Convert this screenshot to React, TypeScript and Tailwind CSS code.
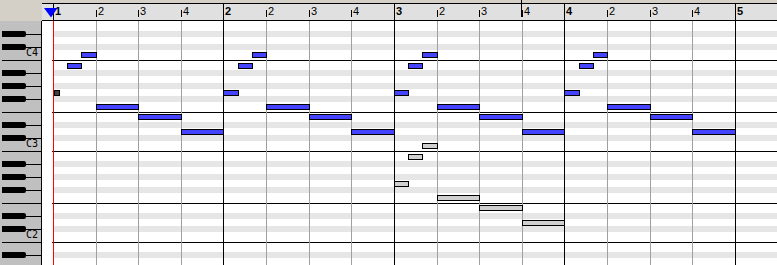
import React from "react";

const BEAT = 42.625;
const X = (b: number) => Math.round(52.99 + b * BEAT);

const PT: Record<string, number> = {
  C4: 52, B3: 63, G3: 90, F3: 104, E3: 114, D3: 129,
  C3: 143, B2: 154, G2: 181, F2: 195, E2: 205, D2: 220,
};

type Note = { p: string; s: number; e: number; kind: "blue" | "gray" | "dark"; x?: number; w?: number };

const notes: Note[] = [];
for (let bar = 0; bar < 4; bar++) {
  const o = bar * 4;
  if (bar === 0) notes.push({ p: "G3", s: 0, e: 0, kind: "dark", x: 54, w: 6 });
  else notes.push({ p: "G3", s: o, e: o + 1 / 3, kind: "blue" });
  notes.push({ p: "B3", s: o + 1 / 3, e: o + 2 / 3, kind: "blue" });
  notes.push({ p: "C4", s: o + 2 / 3, e: o + 1, kind: "blue" });
  notes.push({ p: "F3", s: o + 1, e: o + 2, kind: "blue" });
  notes.push({ p: "E3", s: o + 2, e: o + 3, kind: "blue" });
  notes.push({ p: "D3", s: o + 3, e: o + 4, kind: "blue" });
}
{
  const o = 8;
  notes.push({ p: "G2", s: o, e: o + 1 / 3, kind: "gray" });
  notes.push({ p: "B2", s: o + 1 / 3, e: o + 2 / 3, kind: "gray" });
  notes.push({ p: "C3", s: o + 2 / 3, e: o + 1, kind: "gray" });
  notes.push({ p: "F2", s: o + 1, e: o + 2, kind: "gray" });
  notes.push({ p: "E2", s: o + 2, e: o + 3, kind: "gray" });
  notes.push({ p: "D2", s: o + 3, e: o + 4, kind: "gray" });
}

const CYCLE = ["E", "D", "C", "B", "A", "G", "F"];
const OCT = [4, 4, 4, 3, 3, 3, 3];
const whiteKeys = Array.from({ length: 19 }, (_, i) => {
  const name = CYCLE[i % 7];
  const oct = OCT[i % 7] - Math.floor(i / 7);
  return { name, oct, i };
});
const hasBlack = (k: number) => k > 0 && ![2, 6].includes((k - 1) % 7);

const BODY_H = 244;
type Row = { h: number; gray: boolean; line: boolean };
const rows: Row[] = (() => {
  const pts: { y: number; gray: boolean; line: boolean }[] = [];
  for (let k = 0; k * 13 < BODY_H + 13; k++) {
    if (hasBlack(k)) {
      pts.push({ y: 13 * k - 3, gray: true, line: false });
      pts.push({ y: 13 * k + 3, gray: false, line: false });
    } else {
      pts.push({ y: 13 * k, gray: false, line: k > 0 });
    }
  }
  const out: Row[] = [];
  for (let i = 0; i < pts.length - 1; i++) {
    const a = pts[i];
    const b = pts[i + 1];
    if (a.y >= BODY_H) break;
    out.push({ h: Math.min(b.y, BODY_H) - a.y, gray: a.gray, line: a.line });
  }
  return out;
})();

const beats = Array.from({ length: 17 }, (_, b) => b);

function RulerMark({ b }: { b: number }) {
  const bar = b % 4 === 0;
  return (
    <div className="absolute top-[3px] h-[18px] flex" style={{ left: X(b) - 42 }}>
      <div className={`w-px bg-black ${bar ? "h-full" : "h-[7px] mt-[7px]"}`} />
      <span className={`ml-[1px] mt-[3px] text-[11px] leading-[11px] ${bar ? "font-bold" : ""}`}>
        {bar ? b / 4 + 1 : (b % 4) + 1}
      </span>
    </div>
  );
}

function WhiteKey({ name, oct, i }: { name: string; oct: number; i: number }) {
  const black = hasBlack(i);
  return (
    <div className="relative h-[13px] shrink-0 flex items-end justify-end pr-[3px]">
      {i > 0 &&
        (black ? (
          <>
            <div className="absolute left-[2px] -top-[3px] w-[24px] h-[6px] bg-black rounded-r-[2px]" />
            <div className="absolute left-[26px] right-0 top-0 h-px bg-black" />
          </>
        ) : (
          <div className="absolute left-[2px] right-0 top-0 h-px bg-black" />
        ))}
      {name === "C" && (
        <span className="text-[10px] leading-[10px] mb-[2px] font-['DejaVu_Sans_Mono',monospace]">
          C{oct}
        </span>
      )}
    </div>
  );
}

export default function App() {
  return (
    <div className="w-[777px] h-[265px] overflow-hidden bg-white flex flex-col font-['Liberation_Sans',Arial,sans-serif] text-black">
      {/* header */}
      <div className="h-[21px] flex shrink-0">
        <div className="w-[42px] bg-[#d4d0c8]" />
        <div className="relative flex-1 flex flex-col">
          <div className="h-[3px] bg-[#d4d0c8]" />
          <div className="h-[18px] bg-[#e0e0e0] border-y border-black" />
          {beats.map((b) => (
            <RulerMark key={b} b={b} />
          ))}
          <div className="absolute top-0 left-[479px] h-[17px] w-px bg-black" />
          <svg className="absolute left-[2px] top-[8px]" width="14" height="10" viewBox="0 0 14 10">
            <polygon points="0,0 13.5,0 7,9.5" fill="#0000ff" />
          </svg>
        </div>
      </div>
      {/* body */}
      <div className="flex-1 flex min-h-0">
        {/* keyboard */}
        <div className="w-[42px] shrink-0 bg-[#c0c0c0] border-r border-black overflow-hidden flex flex-col">
          {whiteKeys.map((k) => (
            <WhiteKey key={k.i} {...k} />
          ))}
        </div>
        {/* grid */}
        <div className="relative flex-1 bg-white overflow-hidden">
          <div className="flex flex-col pl-[10px]">
            {rows.map((r, i) => (
              <div
                key={i}
                className={`shrink-0 ${r.line ? "border-t border-black" : ""} ${r.gray ? "bg-[linear-gradient(to_right,white_1px,#e6e6e6_1px)]" : ""}`}
                style={{ height: r.h }}
              />
            ))}
          </div>
          {beats.map((b) => (
            <div
              key={b}
              className={`absolute top-0 bottom-0 w-px ${b === 0 ? "bg-[#ff0000]" : b % 4 === 0 ? "bg-black" : "bg-[#a0a0a0]"}`}
              style={{ left: X(b) - 42 }}
            />
          ))}
          {notes.map((n, i) => {
            const left = n.x ?? X(n.s);
            const w = n.w ?? X(n.e) - X(n.s) + 1;
            const cls =
              n.kind === "blue" ? "bg-[#4444ff]" : n.kind === "gray" ? "bg-[#d0d0d0]" : "bg-[#404040]";
            return (
              <div
                key={i}
                className={`absolute h-[6px] border border-black ${cls}`}
                style={{ left: left - 42, top: PT[n.p] - 21, width: w }}
              />
            );
          })}
        </div>
      </div>
    </div>
  );
}
